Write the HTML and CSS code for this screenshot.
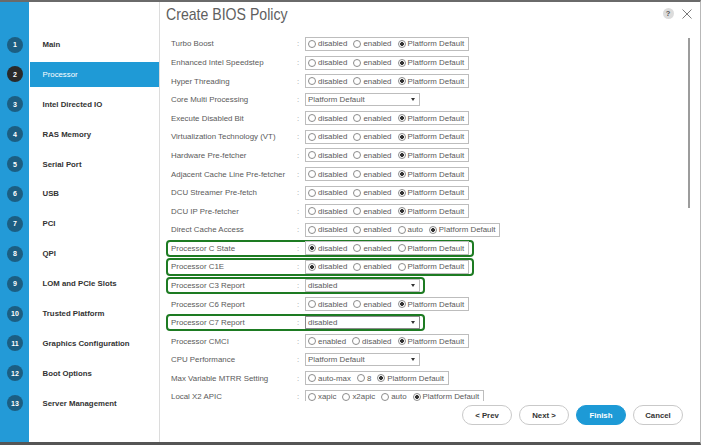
FILE: index.html
```html
<!DOCTYPE html>
<html lang="en">
<head>
<meta charset="utf-8">
<title>Create BIOS Policy</title>
<link rel="stylesheet" href="styles.css">
</head>
<body>
<div class="frame">
  <nav class="steps">
    <div class="step"><span class="num">1</span><span class="name">Main</span></div>
    <div class="step active"><span class="num">2</span><span class="name">Processor</span></div>
    <div class="step"><span class="num">3</span><span class="name">Intel Directed IO</span></div>
    <div class="step"><span class="num">4</span><span class="name">RAS Memory</span></div>
    <div class="step"><span class="num">5</span><span class="name">Serial Port</span></div>
    <div class="step"><span class="num">6</span><span class="name">USB</span></div>
    <div class="step"><span class="num">7</span><span class="name">PCI</span></div>
    <div class="step"><span class="num">8</span><span class="name">QPI</span></div>
    <div class="step"><span class="num">9</span><span class="name">LOM and PCIe Slots</span></div>
    <div class="step"><span class="num">10</span><span class="name">Trusted Platform</span></div>
    <div class="step"><span class="num">11</span><span class="name">Graphics Configuration</span></div>
    <div class="step"><span class="num">12</span><span class="name">Boot Options</span></div>
    <div class="step"><span class="num">13</span><span class="name">Server Management</span></div>
  </nav>
  <main class="panel">
    <header class="head">
      <h1 class="title">Create BIOS Policy</h1>
      <div class="tools">
        <span class="help">?</span>
        <svg class="close" width="10" height="10" viewBox="0 0 10 10"><path d="M0.5 0.5 L9.5 9.5 M9.5 0.5 L0.5 9.5" stroke="#7a7a7a" stroke-width="1" fill="none"/></svg>
      </div>
    </header>
    <div class="form">
      <div class="row"><span class="lbl">Turbo Boost</span><span class="colon">:</span>
        <div class="radios"><span class="opt"><i class="rb"></i>disabled</span><span class="opt"><i class="rb"></i>enabled</span><span class="opt"><i class="rb on"></i>Platform Default</span></div></div>
      <div class="row"><span class="lbl">Enhanced Intel Speedstep</span><span class="colon">:</span>
        <div class="radios"><span class="opt"><i class="rb"></i>disabled</span><span class="opt"><i class="rb"></i>enabled</span><span class="opt"><i class="rb on"></i>Platform Default</span></div></div>
      <div class="row"><span class="lbl">Hyper Threading</span><span class="colon">:</span>
        <div class="radios"><span class="opt"><i class="rb"></i>disabled</span><span class="opt"><i class="rb"></i>enabled</span><span class="opt"><i class="rb on"></i>Platform Default</span></div></div>
      <div class="row"><span class="lbl">Core Multi Processing</span><span class="colon">:</span>
        <div class="select"><span>Platform Default</span><i class="arrow"></i></div></div>
      <div class="row"><span class="lbl">Execute Disabled Bit</span><span class="colon">:</span>
        <div class="radios"><span class="opt"><i class="rb"></i>disabled</span><span class="opt"><i class="rb"></i>enabled</span><span class="opt"><i class="rb on"></i>Platform Default</span></div></div>
      <div class="row"><span class="lbl">Virtualization Technology (VT)</span><span class="colon">:</span>
        <div class="radios"><span class="opt"><i class="rb"></i>disabled</span><span class="opt"><i class="rb"></i>enabled</span><span class="opt"><i class="rb on"></i>Platform Default</span></div></div>
      <div class="row"><span class="lbl">Hardware Pre-fetcher</span><span class="colon">:</span>
        <div class="radios"><span class="opt"><i class="rb"></i>disabled</span><span class="opt"><i class="rb"></i>enabled</span><span class="opt"><i class="rb on"></i>Platform Default</span></div></div>
      <div class="row"><span class="lbl">Adjacent Cache Line Pre-fetcher</span><span class="colon">:</span>
        <div class="radios"><span class="opt"><i class="rb"></i>disabled</span><span class="opt"><i class="rb"></i>enabled</span><span class="opt"><i class="rb on"></i>Platform Default</span></div></div>
      <div class="row"><span class="lbl">DCU Streamer Pre-fetch</span><span class="colon">:</span>
        <div class="radios"><span class="opt"><i class="rb"></i>disabled</span><span class="opt"><i class="rb"></i>enabled</span><span class="opt"><i class="rb on"></i>Platform Default</span></div></div>
      <div class="row"><span class="lbl">DCU IP Pre-fetcher</span><span class="colon">:</span>
        <div class="radios"><span class="opt"><i class="rb"></i>disabled</span><span class="opt"><i class="rb"></i>enabled</span><span class="opt"><i class="rb on"></i>Platform Default</span></div></div>
      <div class="row"><span class="lbl">Direct Cache Access</span><span class="colon">:</span>
        <div class="radios"><span class="opt"><i class="rb"></i>disabled</span><span class="opt"><i class="rb"></i>enabled</span><span class="opt"><i class="rb"></i>auto</span><span class="opt"><i class="rb on"></i>Platform Default</span></div></div>
      <div class="row hl"><span class="lbl">Processor C State</span><span class="colon">:</span>
        <div class="radios"><span class="opt"><i class="rb on"></i>disabled</span><span class="opt"><i class="rb"></i>enabled</span><span class="opt"><i class="rb"></i>Platform Default</span></div></div>
      <div class="row hl"><span class="lbl">Processor C1E</span><span class="colon">:</span>
        <div class="radios"><span class="opt"><i class="rb on"></i>disabled</span><span class="opt"><i class="rb"></i>enabled</span><span class="opt"><i class="rb"></i>Platform Default</span></div></div>
      <div class="row hl"><span class="lbl">Processor C3 Report</span><span class="colon">:</span>
        <div class="select"><span>disabled</span><i class="arrow"></i></div></div>
      <div class="row"><span class="lbl">Processor C6 Report</span><span class="colon">:</span>
        <div class="radios"><span class="opt"><i class="rb"></i>disabled</span><span class="opt"><i class="rb"></i>enabled</span><span class="opt"><i class="rb on"></i>Platform Default</span></div></div>
      <div class="row hl"><span class="lbl">Processor C7 Report</span><span class="colon">:</span>
        <div class="select focus"><span>disabled</span><i class="arrow"></i></div></div>
      <div class="row"><span class="lbl">Processor CMCI</span><span class="colon">:</span>
        <div class="radios"><span class="opt"><i class="rb"></i>enabled</span><span class="opt"><i class="rb"></i>disabled</span><span class="opt"><i class="rb on"></i>Platform Default</span></div></div>
      <div class="row"><span class="lbl">CPU Performance</span><span class="colon">:</span>
        <div class="select"><span>Platform Default</span><i class="arrow"></i></div></div>
      <div class="row"><span class="lbl">Max Variable MTRR Setting</span><span class="colon">:</span>
        <div class="radios"><span class="opt"><i class="rb"></i>auto-max</span><span class="opt"><i class="rb"></i>8</span><span class="opt"><i class="rb on"></i>Platform Default</span></div></div>
      <div class="row"><span class="lbl">Local X2 APIC</span><span class="colon">:</span>
        <div class="radios"><span class="opt"><i class="rb"></i>xapic</span><span class="opt"><i class="rb"></i>x2apic</span><span class="opt"><i class="rb"></i>auto</span><span class="opt"><i class="rb on"></i>Platform Default</span></div></div>
      <div class="scrollbar"></div>
    </div>
    <footer class="foot">
      <button class="btn">&lt; Prev</button>
      <button class="btn">Next &gt;</button>
      <button class="btn primary">Finish</button>
      <button class="btn">Cancel</button>
    </footer>
  </main>
</div>
</body>
</html>
```
FILE: styles.css
```css
* { box-sizing: border-box; }
html, body { margin: 0; padding: 0; }
body {
  width: 701px;
  height: 445px;
  overflow: hidden;
  font-family: "Liberation Sans", Arial, sans-serif;
  background: #fff;
}
.frame {
  display: flex;
  width: 701px;
  height: 445px;
  border-top: 2px solid #6a6a6a;
  border-bottom: 3px solid #555;
  border-right: 1px solid #b8b8b8;
}
.steps {
  width: 160px;
  flex: none;
  display: flex;
  flex-direction: column;
  gap: 4.9px;
  padding-top: 30px;
  background: linear-gradient(to right, #239ad7 0, #239ad7 29px, #fff 29px);
  border-right: 1px solid #dcdcdc;
}
.step {
  display: flex;
  height: 25px;
  align-items: center;
}
.num {
  width: 16px;
  height: 16px;
  flex: none;
  margin: 0 6.5px 0 7px;
  border-radius: 50%;
  background: #1c5e82;
  color: #fff;
  font-size: 7px;
  font-weight: bold;
  display: flex;
  align-items: center;
  justify-content: center;
}
.step.active .num { background: #2a2a2a; }
.name {
  flex: 1;
  height: 100%;
  display: flex;
  align-items: center;
  padding-left: 13px;
  font-size: 7.8px;
  font-weight: bold;
  color: #333;
}
.step.active .name {
  background: #1f9ad6;
  color: #fff;
  font-weight: normal;
}
.panel {
  flex: 1;
  display: flex;
  flex-direction: column;
  background: #fff;
  min-width: 0;
}
.head {
  height: 25px;
  flex: none;
  display: flex;
  align-items: center;
  justify-content: space-between;
  padding: 0 8px 0 6px;
}
.title {
  margin: 0;
  font-family: "Liberation Sans", sans-serif;
  font-size: 17px;
  font-weight: normal;
  color: #5e5e5e;
  line-height: 1;
  transform: scaleX(0.83);
  transform-origin: left center;
  white-space: nowrap;
}
.tools {
  display: flex;
  align-items: center;
  gap: 8.5px;
  margin-top: -2px;
}
.help {
  width: 11px;
  height: 11px;
  border-radius: 50%;
  background: #dcdcdc;
  color: #555;
  font-size: 7.5px;
  font-weight: bold;
  display: flex;
  align-items: center;
  justify-content: center;
}
.close { display: block; }
.form {
  flex: 1;
  position: relative;
  overflow: hidden;
  padding-top: 8.2px;
  font-size: 7.9px;
  color: #5a5a5a;
}
.row {
  display: flex;
  align-items: center;
  width: fit-content;
  height: 17.58px;
  margin: 0 0 1px 6px;
  padding: 0 3px;
  border: 2px solid transparent;
  border-radius: 4px;
}
.row.hl { border-color: #1d7b22; }
.lbl {
  width: 126px;
  flex: none;
  white-space: nowrap;
}
.colon {
  width: 8px;
  flex: none;
  color: #9a9a9a;
}
.radios {
  display: flex;
  align-items: center;
  height: 14px;
  border: 1px solid #bdbdbd;
  padding: 0 4px 0 2px;
  gap: 6px;
  white-space: nowrap;
  flex: none;
}
.opt {
  display: flex;
  align-items: center;
  gap: 2px;
}
.rb {
  display: block;
  width: 8px;
  height: 8px;
  border: 1px solid #8c8c8c;
  border-radius: 50%;
  background: #fff;
}
.rb.on {
  background: radial-gradient(circle, #333 0, #333 1.6px, #fff 2.2px);
}
.select {
  display: flex;
  align-items: center;
  width: 115px;
  height: 13px;
  border: 1px solid #bdbdbd;
  padding: 0 4px 0 2px;
  flex: none;
}
.select.focus { border-color: #8a8a8a; }
.arrow {
  margin-left: auto;
  width: 0;
  height: 0;
  border-left: 2.5px solid transparent;
  border-right: 2.5px solid transparent;
  border-top: 3.5px solid #333;
}
.scrollbar {
  position: absolute;
  left: 528px;
  top: 11px;
  width: 2px;
  height: 170px;
  background: #9c9c9c;
}
.foot {
  height: 41.5px;
  flex: none;
  display: flex;
  justify-content: flex-end;
  align-items: flex-start;
  gap: 7px;
  padding: 4.5px 17px 0 0;
}
.btn {
  width: 50px;
  height: 20px;
  border: 1px solid #c9c9c9;
  border-radius: 10px;
  background: #fff;
  font-family: "Liberation Sans", Arial, sans-serif;
  font-size: 7.8px;
  font-weight: bold;
  color: #333;
  padding: 0;
}
.btn.primary {
  background: #1d9ad6;
  border-color: #1d9ad6;
  color: #fff;
}
```
